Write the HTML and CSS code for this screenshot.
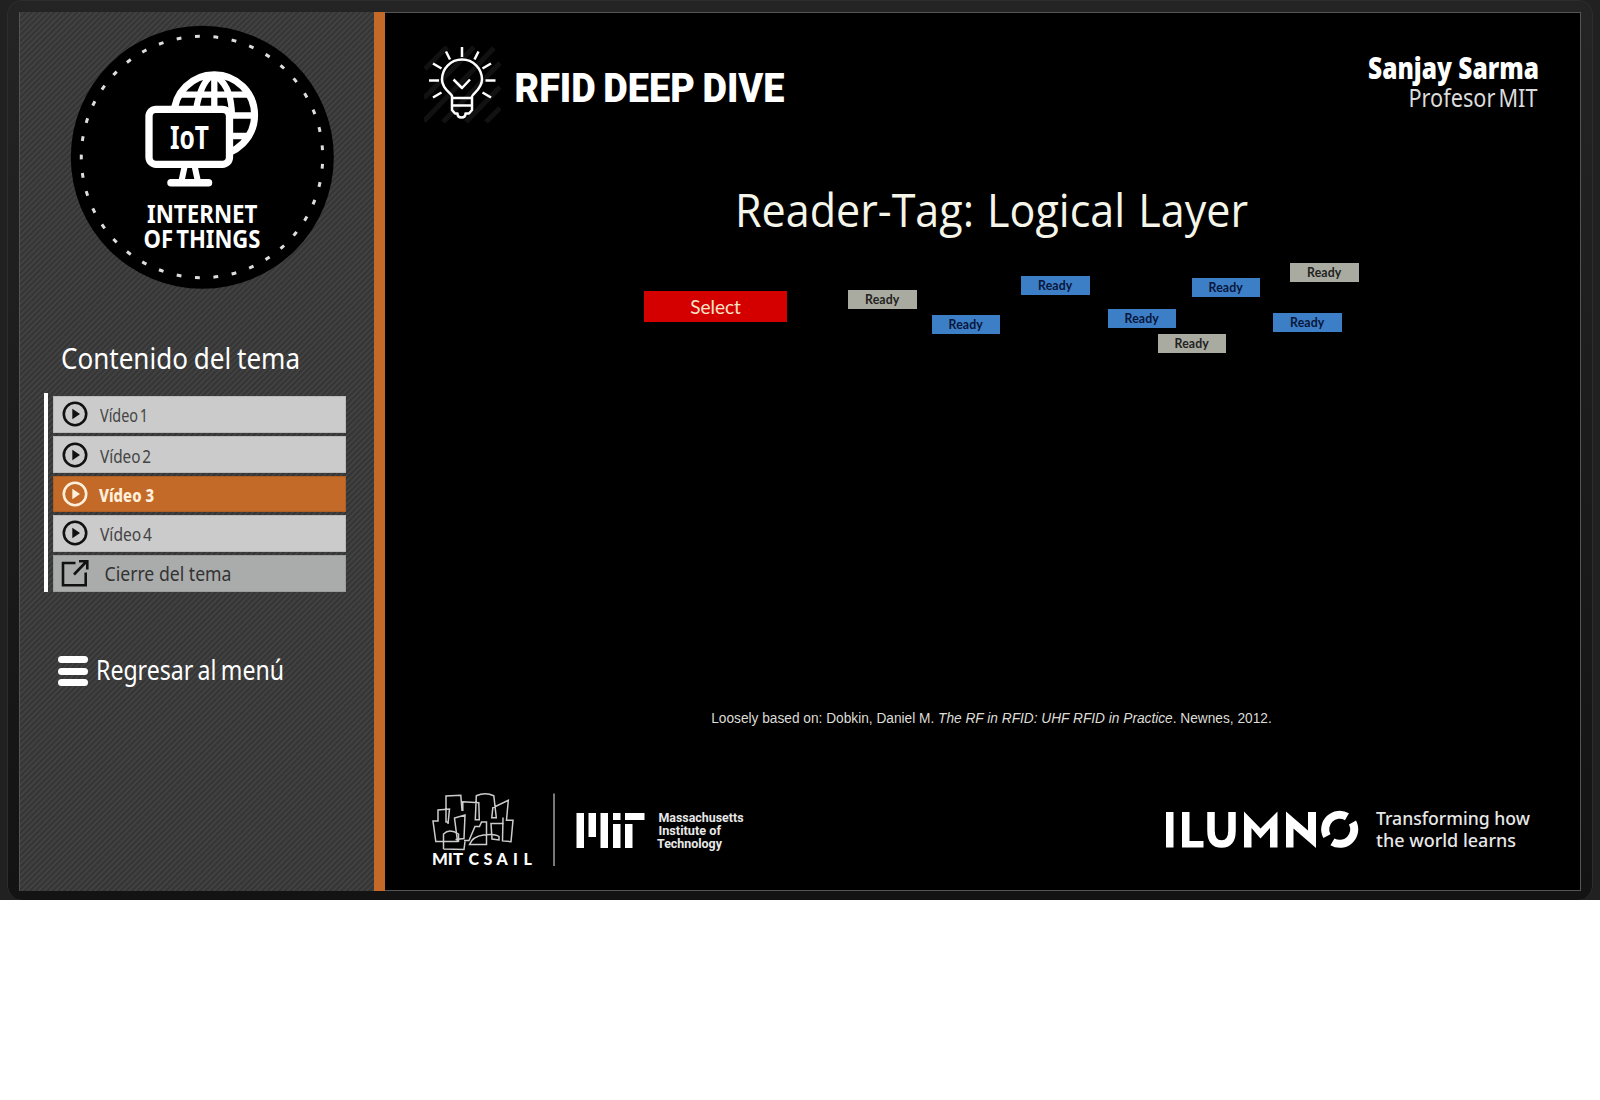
FILE: index.html
```html
<!DOCTYPE html>
<html lang="es">
<head>
<meta charset="utf-8">
<title>Internet of Things - RFID Deep Dive</title>
<link rel="stylesheet" href="styles.css">
</head>
<body>
<svg class="defs" width="0" height="0">
  <symbol id="play" viewBox="0 0 26 26">
    <circle cx="13" cy="13" r="11.2" fill="none" stroke="currentColor" stroke-width="2.6"/>
    <path d="M10.3 7.8v10.4l7.7-5.2z" fill="currentColor"/>
  </symbol>
</svg>
<div class="player">
 <div class="shell">
  <div class="stage">
    <aside class="sidebar">
      <svg class="badge" width="264" height="264" viewBox="70 25 264 264">
        <circle cx="202.3" cy="157.200" r="131.5" fill="#000"/>
        <circle class="dots" cx="202" cy="157" r="120.7" pathLength="41" transform="rotate(180 202 157)"/>
        <g fill="none" stroke="#fff" stroke-width="7">
          <circle cx="214.3" cy="115" r="40.300"/>
          <path d="M214.300 74v34M211 76c-8 6-12 18-14.500 31M216.500 76c12 10 15 22 15.500 40M181 94.700h67M232 115.500h24M232 136h15" stroke-width="6.300"/>
        </g>
        <rect x="149" y="109.300" width="80.500" height="55" rx="7" fill="#000" stroke="#fff" stroke-width="7.300"/>
        <path d="M184.500 167l-3 14M194.800 167l3 14" stroke="#fff" stroke-width="6" fill="none"/>
        <path d="M171 182.700h37.500" stroke="#fff" stroke-width="7.500" stroke-linecap="round"/>
        <g class="badge-text">
          <text class="iot" x="170" y="149" textLength="39" lengthAdjust="spacingAndGlyphs">IoT</text>
          <text x="147" y="223" textLength="110.500" lengthAdjust="spacingAndGlyphs">INTERNET</text>
          <text x="143.500" y="247.500" textLength="117" lengthAdjust="spacingAndGlyphs">OF THINGS</text>
        </g>
      </svg>
      <svg class="side-title" width="250" height="42" role="heading">
        <text x="0" y="31" textLength="239" lengthAdjust="spacingAndGlyphs">Contenido del tema</text>
      </svg>
      <nav class="topics">
        <a class="topic"><svg class="play"><use href="#play"/></svg><svg class="name"><text x="0" y="20" textLength="48" lengthAdjust="spacingAndGlyphs">Vídeo 1</text></svg></a>
        <a class="topic"><svg class="play"><use href="#play"/></svg><svg class="name"><text x="0" y="19.500" textLength="51" lengthAdjust="spacingAndGlyphs">Vídeo 2</text></svg></a>
        <a class="topic active"><svg class="play"><use href="#play"/></svg><svg class="name"><text x="-1" y="19.500" textLength="55" lengthAdjust="spacingAndGlyphs">Vídeo 3</text></svg></a>
        <a class="topic"><svg class="play"><use href="#play"/></svg><svg class="name"><text x="0" y="19.500" textLength="52" lengthAdjust="spacingAndGlyphs">Vídeo 4</text></svg></a>
        <a class="topic closing">
          <svg class="exit" viewBox="0 0 28 28"><path d="M14.500 4H2v22.200h22.700V13.500M13 15.500L25 3M18 2.200h8.300v8.300" fill="none" stroke="currentColor" stroke-width="2.600"/></svg>
          <svg class="name"><text x="0.500" y="19.500" textLength="127" lengthAdjust="spacingAndGlyphs">Cierre del tema</text></svg>
        </a>
      </nav>
      <a class="back">
        <span class="burger"><i></i><i></i><i></i></span>
        <svg width="200" height="36"><text x="0" y="27" textLength="188" lengthAdjust="spacingAndGlyphs">Regresar al menú</text></svg>
      </a>
    </aside>
    <main class="content">
      <header class="top">
        <div class="topic-title">
          <svg class="bulb" width="77" height="77" viewBox="424 46 77 77">
            <path d="M425 69l22-22M424 98l50-51M424 121l70-73M443 122l57-59M466 122l34-35M486 122l14-14" stroke="#111" stroke-width="5"/>
            <g fill="none" stroke="#fff" stroke-width="2.500" stroke-linejoin="round">
              <path d="M452 97v-1c-1-3-10-7-10-16.500a20 20 0 1 1 40 0C482 89 473 93 472 96.500V110l-3 3.500h-3.500q0 4-4 4t-4-4H455l-3-3.500zM452 98h20M453 105.500h18M453.500 79.500l8.500 8.500 8-8.500"/>
              <path d="M462 47v10M446 51.500l4 8M478.500 51.500l-4 8M433 63.500l8.500 5M491 63.500l-8.500 5M429 80.500h10M485.500 80.500h10M433 97.500l8.500-5M491 97.500l-8.500-5"/>
            </g>
          </svg>
          <svg class="heading" width="290" height="50" role="heading"><text x="0.500" y="38.500" textLength="270" lengthAdjust="spacingAndGlyphs">RFID DEEP DIVE</text></svg>
        </div>
        <svg class="speaker" width="174" height="64">
          <text class="who" x="2" y="28.500" textLength="171" lengthAdjust="spacingAndGlyphs">Sanjay Sarma</text>
          <text class="role" x="42.500" y="56.500" textLength="129" lengthAdjust="spacingAndGlyphs">Profesor MIT</text>
        </svg>
      </header>
      <section class="slide">
        <svg class="slide-title" width="520" height="66" role="heading"><text x="0" y="49" textLength="513" lengthAdjust="spacingAndGlyphs">Reader-Tag: Logical Layer</text></svg>
        <div class="diagram">
          <div class="node select">Select</div>
          <div class="node tag grey t1">Ready</div>
          <div class="node tag t2">Ready</div>
          <div class="node tag t3">Ready</div>
          <div class="node tag t4">Ready</div>
          <div class="node tag grey t5">Ready</div>
          <div class="node tag t6">Ready</div>
          <div class="node tag grey t7">Ready</div>
          <div class="node tag t8">Ready</div>
        </div>
        <svg class="citation" width="566" height="24"><text x="3.200" y="16.700" textLength="560.500" lengthAdjust="spacingAndGlyphs">Loosely based on: Dobkin, Daniel M. <tspan class="book">The RF in RFID: UHF RFID in Practice</tspan>. Newnes, 2012.</text></svg>
      </section>
      <footer class="logos">
        <svg width="324" height="80" viewBox="430 790 324 80">
          <g fill="none" stroke="#ccc" stroke-width="1.500" transform="translate(0 .5)">
            <path d="M448 823.500l1.500-15-11.500 1v11h-5l2.800 20.500H457.500l-3-23.500 10.500-3-1 23.500-8.500 1M449 821.500h-3v-26l14.800-.8 1.200 15h.8v-8.500l16 1 .5 17h-4l1-24q9-4 17.500 0l2.500 22h-4.500l1-10 15.500-7.500-1.800 20h6.500l-2 21.500-8.500-.8.500-23.500"/>
            <path d="M464 840h5l6-14h4.500l2-4.500h5V844H469.500q3-8 14-9.500t15.500 1.500v3.500l-7-1-1-15.500h12.500M443.500 848.500v-15q6-6 15 0v8M443.500 848.500l20.500.5 1-8"/>
          </g>
          <g class="csail"><text x="432" y="865" textLength="31" lengthAdjust="spacingAndGlyphs">MIT</text><text x="468.500 483.500 496.500 513 523.500" y="865">CSAIL</text></g>
          <path d="M554 793.500v72.500" stroke="#777" stroke-width="2"/>
          <path d="M576.500 813h7.500v35h-7.500zM588.500 813h7.500v24h-7.500zM600.500 813h7.500v35h-7.500zM613 813h7.500v7h-7.500zM613 824h7.500v24h-7.500zM625 813h19.500v7H625zM625 824h7.500v24h-7.500z" fill="#fff"/>
          <g class="mit-name">
            <text x="658.500" y="821.700" textLength="85" lengthAdjust="spacingAndGlyphs">Massachusetts</text>
            <text x="658.500" y="835" textLength="62.500" lengthAdjust="spacingAndGlyphs">Institute of</text>
            <text x="657" y="848.300" textLength="65" lengthAdjust="spacingAndGlyphs">Technology</text>
          </g>
        </svg>
        <svg width="368" height="46" viewBox="1164 806 368 46">
          <path d="M1166 812h7.500v35.500h-7.500zM1182 812h7.500v29h14v6.500H1182z" fill="#fff"/>
          <path d="M1211 812v18.500q0 13.500 10.500 13.500t10.500-13.500V812" fill="none" stroke="#fff" stroke-width="7.500"/>
          <path d="M1244 847.500V811.500l16.500 17 17-17v36h-7.500v-19.500l-9.500 10.500-9-10.500v19.500zM1286 847.500V811.500l22 19v-18.500h8v36l-22.500-19.500v19z" fill="#fff"/>
          <path d="M1326.900 836.100A14.500 14.500 0 0 1 1346.950 816.700M1352.500 822.500A14.500 14.500 0 0 1 1332.450 841.900" fill="none" stroke="#fff" stroke-width="8"/>
          <g class="slogan">
            <text x="1376" y="825" textLength="154" lengthAdjust="spacingAndGlyphs">Transforming how</text>
            <text x="1376" y="847" textLength="140" lengthAdjust="spacingAndGlyphs">the world learns</text>
          </g>
        </svg>
      </footer>
    </main>
  </div>
 </div>
</div>
</body>
</html>
```
FILE: styles.css
```css
* { box-sizing: border-box; }
body { margin: 0; background: #fff; font-family: "Noto Sans", sans-serif; }
svg { display: block; flex: none; overflow: visible; }
text { fill: #fff; }
.defs { position: absolute; }

.player { height: 900px; padding: 0 7px; background: #212121; }
.shell {
  height: 900px;
  padding: 11px 11px 8px;
  border: 1px solid #2d2d2d;
  border-bottom: 0;
  border-radius: 15px;
  background: linear-gradient(#242424, #131313);
}
.stage {
  display: flex;
  width: 1562px;
  height: 879px;
  border: 1px solid #555;
  background: #000;
}

.sidebar {
  width: 365px;
  flex: none;
  border-right: 11px solid #c46a28;
  margin: -1px 0;
  padding-top: 13px;
  background: repeating-linear-gradient(135deg, #353535 0, #373737 1.4px, #454545 2.4px, #434343 2.8px, #353535 4px);
}
.badge { margin-left: 50px; }
.dots { fill: none; stroke: #ddd; stroke-width: 3; stroke-dasharray: .26 .74; stroke-dashoffset: .13; }
.badge-text { font: 700 25px "Noto Sans", sans-serif; word-spacing: -3px; }
.iot { font-size: 33px; }
.side-title { margin: 49px 0 0 41px; }
.side-title text { font-size: 29px; word-spacing: -1px; }

.topics {
  display: flex;
  flex-direction: column;
  gap: 2px;
  width: 302px;
  height: 199px;
  margin: 13px 0 0 24px;
  padding: 3px 0 0 5px;
  border-left: 4px solid #fff;
}
.topic {
  display: flex;
  align-items: center;
  height: 37px;
  margin-bottom: .3px;
  padding-left: 8px;
  background: #cbcbcb;
  border: 1px solid #b9b9b9;
  color: #111;
}
.topic:first-child { margin-bottom: 1.5px; }
.topic .play { width: 26px; height: 26px; margin-right: 12px; }
.topic .name { width: 130px; height: 24px; }
.topic text { fill: #444; font-size: 17.5px; word-spacing: -2.5px; }
.topic.active { background: #c46a28; border-color: #b45f22; color: #fff0dc; }
.topic.active text { fill: #fff0dc; font-weight: 800; word-spacing: 0; }
.topic.closing { background: #aaacab; border-color: #9b9d9c; padding-left: 7px; margin-top: 1px; }
.topic.closing text { fill: #333; font-size: 19.5px; word-spacing: 0; }
.exit { width: 28px; height: 28px; margin-right: 15px; }

.back { display: flex; align-items: center; gap: 8px; margin: 61px 0 0 38px; }
.back text { font-size: 26.5px; word-spacing: -2px; }
.burger { display: grid; gap: 4.5px; width: 30px; }
.burger i { height: 7px; border-radius: 3.5px; background: #fff; }

.content { display: flex; flex-direction: column; flex: 1; }
.top { display: flex; justify-content: space-between; height: 140px; padding: 33px 40px 0 39px; }
.topic-title { display: flex; gap: 13px; }
.bulb { overflow: hidden; }
.heading { margin-top: 17px; }
.heading text { font: 900 41.5px Roboto, sans-serif; word-spacing: -2px; }
.speaker { margin-top: 4px; }
.who { font-size: 29.5px; font-weight: 900; }
.role { font-size: 26px; font-weight: 400; fill: #dcdcdc; word-spacing: -3px; }

.slide { position: relative; height: 617px; padding-top: 25px; font-family: Lato, sans-serif; }
.slide-title { margin-left: 350px; }
.slide-title text { font-family: "Open Sans", sans-serif; font-size: 45px; fill: #f5f5ea; word-spacing: 2px; }
.diagram { height: 462px; }
.node { position: absolute; display: flex; align-items: center; justify-content: center; }
.select { left: 258.5px; top: 138px; width: 143px; height: 31px; background: #d40000; color: #f8e4c8; font-size: 19px; padding-left: 1px; }
.tag { width: 68.5px; height: 19px; background: #3d7fc6; color: #08163c; font-size: 12.3px; font-weight: 700; letter-spacing: .1px; }
.tag.grey { background: #aaaba0; color: #22221e; }
.t1 { left: 463px; top: 136.5px; }
.t2 { left: 546.5px; top: 162px; }
.t3 { left: 636px; top: 122.5px; }
.t4 { left: 722.5px; top: 155.5px; }
.t5 { left: 772.5px; top: 181px; }
.t6 { left: 806.5px; top: 125px; }
.t7 { left: 905px; top: 110px; }
.t8 { left: 888px; top: 159.5px; }
.citation { margin-left: 323px; }
.citation text { font: 14px "Liberation Sans", sans-serif; fill: #ddddd6; }
.citation .book { font-style: italic; }

.logos { display: flex; justify-content: space-between; align-items: flex-start; height: 120px; padding: 20px 48px 0 45px; }
.logos > svg:last-child { margin-top: 16px; }
.csail { font: 900 16px Lato, sans-serif; }
.mit-name { font: 700 12.5px Roboto, sans-serif; }
.slogan { font: 500 18px "Noto Sans", sans-serif; }
.slogan text, .mit-name text { fill: #e8e8e8; }
```
